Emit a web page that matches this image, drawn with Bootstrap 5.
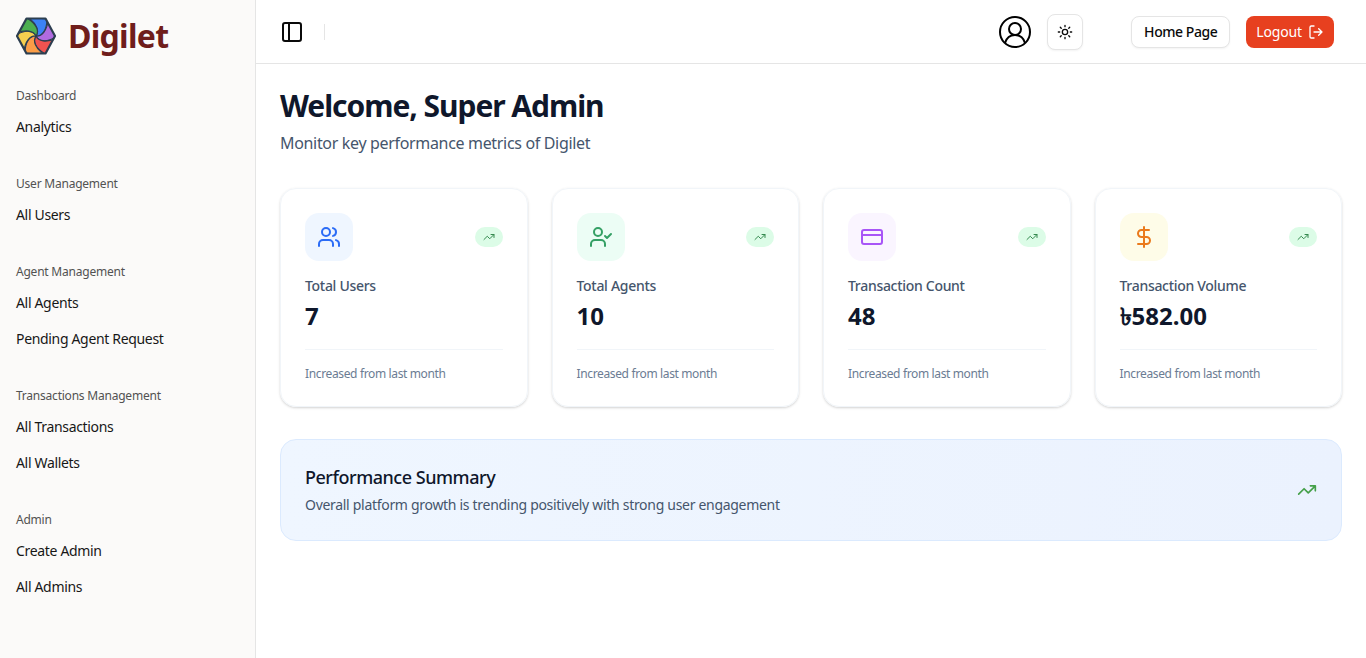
<!DOCTYPE html>
<html lang="en">
<head>
    <meta charset="UTF-8">
    <meta name="viewport" content="width=device-width, initial-scale=1.0">
    <title>Digilet Dashboard</title>
    <link href="https://cdn.jsdelivr.net/npm/bootstrap@5.3.3/dist/css/bootstrap.min.css" rel="stylesheet">
    <style>
        body { font-family: "Noto Sans", "DejaVu Sans", sans-serif; color: #0a0a0a; background: #fff; overflow: hidden; }
        svg.lu { fill: none; stroke: currentColor; stroke-width: 2; stroke-linecap: round; stroke-linejoin: round; }
        .side-panel { width: 256px; height: 658px; background: #fbfaf9; border-right: 1px solid #e5e5e5; padding: 17px 16px 0; }
        .brand-row { height: 38px; gap: 12px; margin-bottom: 26px; }
        .brand-name { font-size: 32px; line-height: 38px; font-weight: 700; color: #6f1d1b; letter-spacing: -.7px; }
        .side-group { margin-bottom: 24px; }
        .group-title { height: 28px; line-height: 30px; font-size: 12px; color: #525252; letter-spacing: -.22px; }
        .side-link { height: 36px; line-height: 36px; font-size: 14px; color: #171717; text-decoration: none; display: block; letter-spacing: -.33px; }
        .top-bar { height: 64px; border-bottom: 1px solid #e5e5e5; padding: 0 32px 0 24px; }
        .v-sep { width: 1px; height: 16px; background: #e5e5e5; margin-left: 20px; }
        .theme-btn { width: 36px; height: 36px; border: 1px solid #e5e5e5; border-radius: 8px; background: #fff; box-shadow: 0 1px 2px rgba(0,0,0,.05); margin-left: 16px; margin-right: 48px; color: #0a0a0a; padding: 0; }
        .home-btn, .logout-btn { height: 32px; font-size: 14px; border-radius: 8px; display: inline-flex; align-items: center; }
        .home-btn { border: 1px solid #e5e5e5; background: #fff; color: #0a0a0a; font-weight: 500; box-shadow: 0 1px 2px rgba(0,0,0,.05); margin-right: 16px; padding: 0 12px; letter-spacing: -.45px; }
        .logout-btn { border: 0; background: #e7401f; color: #fff; gap: 6px; padding: 0 10px; letter-spacing: -.15px; }
        .page-body { padding: 24px 24px 0; }
        .page-title { font-size: 30px; line-height: 36px; font-weight: 700; color: #0f172b; margin: 0 0 7px; letter-spacing: -1.05px; }
        .page-sub { font-size: 16px; line-height: 24px; color: #45556c; margin: 0 0 33px; letter-spacing: -.33px; }
        .stat-box { height: 219px; border: 1px solid #f1f5f9; border-radius: 16px; box-shadow: 0 1px 3px rgba(0,0,0,.12), 0 1px 2px rgba(0,0,0,.06); padding: 24px; }
        .icon-tile { width: 48px; height: 48px; border-radius: 14px; display: flex; align-items: center; justify-content: center; }
        .tile-blue { background: #eff6ff; color: #2b6cf6; }
        .tile-green { background: #ecfdf5; color: #35a065; }
        .tile-purple { background: #faf5ff; color: #a855f7; }
        .tile-amber { background: #fefce8; color: #ea7a1c; }
        .up-pill { width: 28px; height: 20px; border-radius: 10px; background: #dcfce7; color: #358a4f; display: flex; align-items: center; justify-content: center; }
        .stat-label { font-size: 14px; line-height: 20px; color: #45556c; font-weight: 500; margin-top: 15px; letter-spacing: -.3px; }
        .stat-value { font-size: 24px; line-height: 32px; font-weight: 700; color: #0f172b; margin-top: 4px; }
        .stat-foot { border-top: 1px solid #f1f5f9; margin-top: 17px; padding-top: 16px; font-size: 12px; line-height: 16px; color: #6b7c93; letter-spacing: -.36px; }
        .summary-box { height: 102px; margin-top: 32px; background: linear-gradient(to right, #eff6ff, #ebf2fe); border: 1px solid #dbeafe; border-radius: 16px; padding: 0 24px; color: #45a049; }
        .summary-copy { padding-bottom: 2px; }
        .summary-title { font-size: 18px; line-height: 28px; font-weight: 500; color: #0f172b; margin-bottom: 4px; letter-spacing: -.47px; }
        .summary-text { font-size: 14px; line-height: 20px; color: #45556c; letter-spacing: -.3px; }
    </style>
</head>
<body>
    <div class="d-flex">
        <aside class="side-panel flex-shrink-0">
            <div class="brand-row d-flex align-items-center">
                <svg width="40" height="40" viewBox="-20 -20 40 40">
                    <defs>
                        <clipPath id="hexClip"><path d="M-9.500-17.500 9.500-17.500 19.500 0 9.500 17.500-9.500 17.500-19.500 0Z"/></clipPath>
                        <path id="petal" d="M0 0C3-5 0-12-9.500-18L9.500-18C10.400-6 5.800.100 0 0Z" stroke="#2c3e50" stroke-width="1.200"/>
                    </defs>
                    <g clip-path="url(#hexClip)">
                        <use href="#petal" fill="#3b82f6" transform="rotate(5)"/>
                        <use href="#petal" fill="#b06be0" transform="rotate(65)"/>
                        <use href="#petal" fill="#ef5350" transform="rotate(125)"/>
                        <use href="#petal" fill="#fb9d47" transform="rotate(185)"/>
                        <use href="#petal" fill="#f5cf4f" transform="rotate(245)"/>
                        <use href="#petal" fill="#4caf50" transform="rotate(305)"/>
                    </g>
                    <path d="M-9.500-17.500 9.500-17.500 19 0 9.500 17.500-9.500 17.500-19 0Z" fill="none" stroke="#2c3e50" stroke-width="2.200" stroke-linejoin="round"/>
                </svg>
                <span class="brand-name">Digilet</span>
            </div>
            <div class="side-group">
                <div class="group-title">Dashboard</div>
                <a class="side-link" href="#">Analytics</a>
            </div>
            <div class="side-group">
                <div class="group-title">User Management</div>
                <a class="side-link" href="#">All Users</a>
            </div>
            <div class="side-group">
                <div class="group-title">Agent Management</div>
                <a class="side-link" href="#">All Agents</a>
                <a class="side-link" href="#">Pending Agent Request</a>
            </div>
            <div class="side-group">
                <div class="group-title">Transactions Management</div>
                <a class="side-link" href="#">All Transactions</a>
                <a class="side-link" href="#">All Wallets</a>
            </div>
            <div class="side-group">
                <div class="group-title">Admin</div>
                <a class="side-link" href="#">Create Admin</a>
                <a class="side-link" href="#">All Admins</a>
            </div>
        </aside>
        <div class="flex-grow-1">
            <header class="top-bar d-flex align-items-center">
                <svg class="lu" width="24" height="24" viewBox="0 0 24 24"><rect x="3" y="3" width="18" height="18" rx="2"/><path d="M9 3v18"/></svg>
                <div class="v-sep"></div>
                <div class="ms-auto d-flex align-items-center">
                    <svg width="32" height="32" viewBox="0 0 32 32" fill="none" stroke="#000" stroke-width="2"><circle cx="16" cy="16" r="15"/><circle cx="16" cy="13" r="6"/><path d="M6 27c1.500-5 5.500-8 10-8s8.500 3 10 8"/></svg>
                    <button class="theme-btn d-flex align-items-center justify-content-center" type="button">
                        <svg class="lu" width="16" height="16" viewBox="0 0 24 24"><circle cx="12" cy="12" r="4"/><path d="M12 2v2M12 20v2M4.930 4.930l1.410 1.410M17.660 17.660l1.410 1.410M2 12h2M20 12h2M6.340 17.660l-1.410 1.410M19.070 4.930l-1.410 1.410"/></svg>
                    </button>
                    <button class="home-btn" type="button">Home Page</button>
                    <button class="logout-btn" type="button">Logout
                        <svg class="lu" width="16" height="16" viewBox="0 0 24 24"><path d="M9 21H5a2 2 0 0 1-2-2V5a2 2 0 0 1 2-2h4"/><path d="M16 17l5-5-5-5M21 12H9"/></svg>
                    </button>
                </div>
            </header>
            <main class="page-body">
                <h1 class="page-title">Welcome, Super Admin</h1>
                <p class="page-sub">Monitor key performance metrics of Digilet</p>
                <div class="row row-cols-4 g-4">
                    <div class="col">
                        <div class="stat-box">
                            <div class="d-flex justify-content-between align-items-center">
                                <div class="icon-tile tile-blue"><svg class="lu" width="24" height="24" viewBox="0 0 24 24"><path d="M16 21v-2a4 4 0 0 0-4-4H6a4 4 0 0 0-4 4v2"/><circle cx="9" cy="7" r="4"/><path d="M22 21v-2a4 4 0 0 0-3-3.870M16 3.130a4 4 0 0 1 0 7.750"/></svg></div>
                                <div class="up-pill"><svg class="lu" width="12" height="12" viewBox="0 0 24 24"><path d="M22 7l-8.500 8.500-5-5L2 17M16 7h6v6"/></svg></div>
                            </div>
                            <div class="stat-label">Total Users</div>
                            <div class="stat-value">7</div>
                            <div class="stat-foot">Increased from last month</div>
                        </div>
                    </div>
                    <div class="col">
                        <div class="stat-box">
                            <div class="d-flex justify-content-between align-items-center">
                                <div class="icon-tile tile-green"><svg class="lu" width="24" height="24" viewBox="0 0 24 24"><path d="M16 21v-2a4 4 0 0 0-4-4H6a4 4 0 0 0-4 4v2"/><circle cx="9" cy="7" r="4"/><path d="M16 11l2 2 4-4"/></svg></div>
                                <div class="up-pill"><svg class="lu" width="12" height="12" viewBox="0 0 24 24"><path d="M22 7l-8.500 8.500-5-5L2 17M16 7h6v6"/></svg></div>
                            </div>
                            <div class="stat-label">Total Agents</div>
                            <div class="stat-value">10</div>
                            <div class="stat-foot">Increased from last month</div>
                        </div>
                    </div>
                    <div class="col">
                        <div class="stat-box">
                            <div class="d-flex justify-content-between align-items-center">
                                <div class="icon-tile tile-purple"><svg class="lu" width="24" height="24" viewBox="0 0 24 24"><rect x="2" y="5" width="20" height="14" rx="2"/><path d="M2 10h20"/></svg></div>
                                <div class="up-pill"><svg class="lu" width="12" height="12" viewBox="0 0 24 24"><path d="M22 7l-8.500 8.500-5-5L2 17M16 7h6v6"/></svg></div>
                            </div>
                            <div class="stat-label">Transaction Count</div>
                            <div class="stat-value">48</div>
                            <div class="stat-foot">Increased from last month</div>
                        </div>
                    </div>
                    <div class="col">
                        <div class="stat-box">
                            <div class="d-flex justify-content-between align-items-center">
                                <div class="icon-tile tile-amber"><svg class="lu" width="24" height="24" viewBox="0 0 24 24"><path d="M12 2v20M17 5H9.500a3.500 3.500 0 0 0 0 7h5a3.500 3.500 0 0 1 0 7H6"/></svg></div>
                                <div class="up-pill"><svg class="lu" width="12" height="12" viewBox="0 0 24 24"><path d="M22 7l-8.500 8.500-5-5L2 17M16 7h6v6"/></svg></div>
                            </div>
                            <div class="stat-label">Transaction Volume</div>
                            <div class="stat-value">৳582.00</div>
                            <div class="stat-foot">Increased from last month</div>
                        </div>
                    </div>
                </div>
                <div class="summary-box d-flex align-items-center justify-content-between">
                    <div class="summary-copy">
                        <div class="summary-title">Performance Summary</div>
                        <div class="summary-text">Overall platform growth is trending positively with strong user engagement</div>
                    </div>
                    <svg class="lu" width="20" height="20" viewBox="0 0 24 24"><path d="M22 7l-8.500 8.500-5-5L2 17M16 7h6v6"/></svg>
                </div>
            </main>
        </div>
    </div>
    <script src="https://cdn.jsdelivr.net/npm/bootstrap@5.3.3/dist/js/bootstrap.bundle.min.js"></script>
</body>
</html>
